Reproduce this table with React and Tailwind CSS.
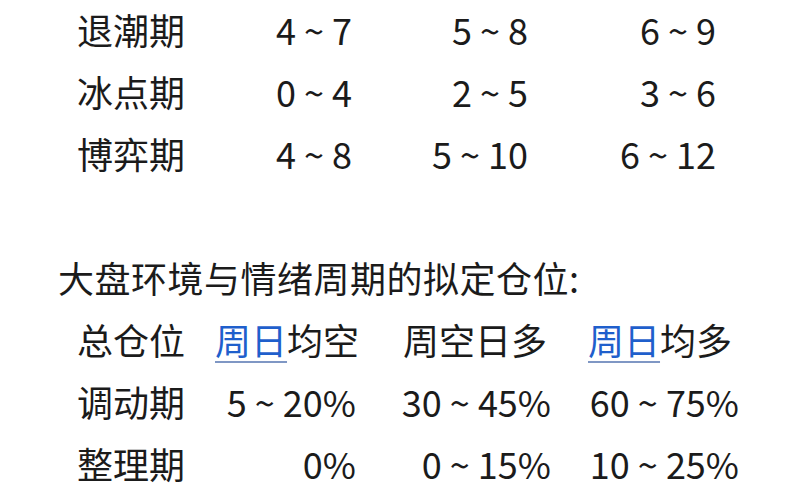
import React from "react";

const font = { fontFamily: '"Noto Sans CJK SC", "Noto Sans", sans-serif' };

const cycleRows = [
  ["退潮期", "4 ~ 7", "5 ~ 8", "6 ~ 9"],
  ["冰点期", "0 ~ 4", "2 ~ 5", "3 ~ 6"],
  ["博弈期", "4 ~ 8", "5 ~ 10", "6 ~ 12"],
];

const positionRows = [
  ["调动期", "5 ~ 20%", "30 ~ 45%", "60 ~ 75%"],
  ["整理期", "0%", "0 ~ 15%", "10 ~ 25%"],
];

const Link = ({ children }) => (
  <span className="text-[#1f5fcc] underline decoration-[#7f97c4] decoration-2 underline-offset-[6px]">
    {children}
  </span>
);

const App = () => {
  return (
    <div
      className="w-[800px] h-[500px] overflow-hidden bg-white text-[#1b1b1b] text-[36px] leading-[62px]"
      style={font}
    >
      <div className="-mt-[2px]">
        {/* first table */}
        {cycleRows.map((row) => (
          <div key={row[0]} className="flex pl-[77px] whitespace-pre">
            <span className="w-[150px]">{row[0]}</span>
            <span className="w-[125px] text-right">{row[1]}</span>
            <span className="w-[176px] text-right">{row[2]}</span>
            <span className="w-[188px] text-right">{row[3]}</span>
          </div>
        ))}

        <div className="h-[62px]" />

        <div className="pl-[58px] tracking-[0.5px]">大盘环境与情绪周期的拟定仓位:</div>

        {/* second table */}
        <div className="flex pl-[77px] whitespace-pre">
          <span className="w-[123px]">总仓位</span>
          <span className="w-[156px] pl-[15px]">
            <Link>周日</Link>均空
          </span>
          <span className="w-[195px] pl-[47px]">周空日多</span>
          <span className="w-[188px] pl-[37px]">
            <Link>周日</Link>均多
          </span>
        </div>
        {positionRows.map((row) => (
          <div key={row[0]} className="flex pl-[77px] whitespace-pre">
            <span className="w-[123px]">{row[0]}</span>
            <span className="w-[156px] text-right">{row[1]}</span>
            <span className="w-[195px] text-right">{row[2]}</span>
            <span className="w-[188px] text-right">{row[3]}</span>
          </div>
        ))}
      </div>
    </div>
  );
};

export default App;
